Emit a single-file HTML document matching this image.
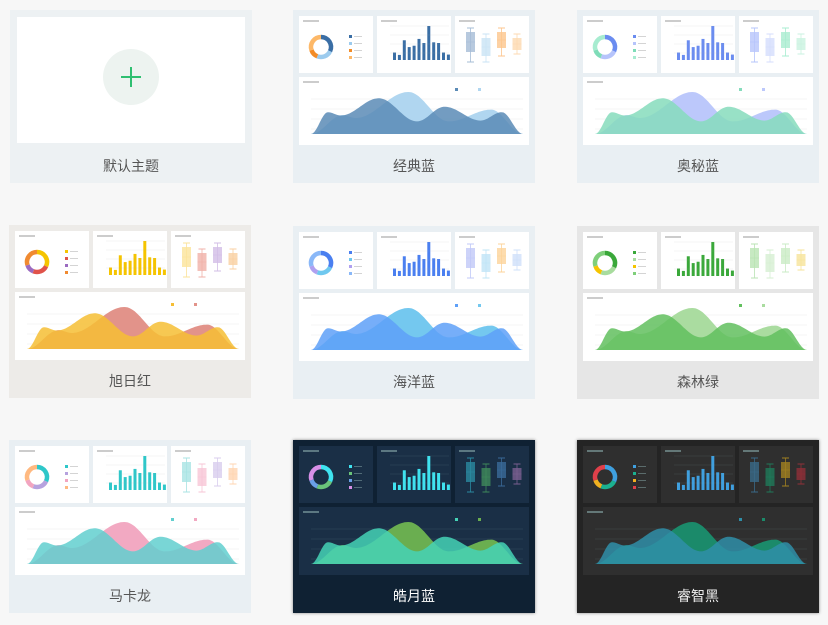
<!DOCTYPE html>
<html><head><meta charset="utf-8"><style>
body{margin:0;background:#f7f7f7;width:828px;height:625px;overflow:hidden;font-family:"Liberation Sans","Noto Sans CJK SC",sans-serif}
.card{position:absolute;width:242px;height:173px}
.lbl{position:absolute;left:0;right:0;top:146px;text-align:center;font-size:14px;color:#555}
</style></head><body>
<div class="card" style="left:10px;top:10px;background:#edf1f3">
 <div style="position:absolute;left:7px;top:7px;width:228px;height:126px;background:#fff"></div>
 <div style="position:absolute;left:93px;top:39px;width:56px;height:56px;border-radius:50%;background:#edf3f0"></div>
 <div style="position:absolute;left:111px;top:66px;width:20px;height:2px;background:#2fbf71"></div>
 <div style="position:absolute;left:120px;top:57px;width:2px;height:20px;background:#2fbf71"></div>
 <div class="lbl">默认主题</div>
</div>
<div id="root"></div>
<script>
const T=[
{x:293,y:10,n:"经典蓝",bg:"#e9eff3",p:"#fff",a:"#5b8bb6",b:"#b0d6f0",bar:"#3a6ea5",d:["#3a6ea5","#9ccbee","#f28c28","#fdb868"],bx:["#a5bcd6","#c9e3f5","#fdc58c","#fdd9b0"],t:"#555"},
{x:577,y:10,n:"奥秘蓝",bg:"#e9eff3",p:"#fff",a:"#86dcbc",b:"#bcc8fb",bar:"#6a8cf0",d:["#6a8cf0","#b6c4fb","#7fdcb8","#a7ecd0"],bx:["#b6c4fb","#d4ddfc","#a7ecd0","#c9f2e0"],t:"#555"},
{x:9,y:225,n:"旭日红",bg:"#edebe8",p:"#fff",a:"#f6be34",b:"#e2938a",bar:"#f5c400",d:["#f5c400","#e0534a","#9b6bc0","#f08a30"],bx:["#fbe39a","#f0b0a8","#d2bde6","#f9cfa0"],t:"#555"},
{x:293,y:226,n:"海洋蓝",bg:"#e9eff3",p:"#fff",a:"#5ea0f8",b:"#74c8ef",bar:"#4a7ff0",d:["#4a7ff0","#6fc8ef","#b0a0f0","#8ab8f8"],bx:["#c0c8f8","#bfe4f6","#fcd39a","#cfe0fa"],t:"#555"},
{x:577,y:226,n:"森林绿",bg:"#e6e6e6",p:"#fff",a:"#62c05e",b:"#aadca0",bar:"#3aa83a",d:["#3aa83a","#a8dc9e","#f5c400","#7fcf7a"],bx:["#b9e3b3","#d6efd2","#c9ebc4","#f6e39a"],t:"#555"},
{x:9,y:440,n:"马卡龙",bg:"#e9eff3",p:"#fff",a:"#62cfcf",b:"#f2a9c2",bar:"#2ec7c9",d:["#2ec7c9","#b6a2de","#f2a5c0","#ffb980"],bx:["#a8e3e3","#f7c5d6","#d8cdee","#ffd4b0"],t:"#555"},
{x:293,y:440,n:"皓月蓝",bg:"#0f2133",p:"#1a2f46",a:"#45d2b6",b:"#6aae50",bar:"#3fe3f0",d:["#3fe3f0","#6ac37a","#6aa0e8","#d890e8"],bx:["#2a8aa0","#3f8a5a","#3a6a98","#7a5f90"],t:"#fff",dark:1},
{x:577,y:440,n:"睿智黑",bg:"#242424",p:"#2f2f2f",a:"#2f8ea8",b:"#1b8a6a",bar:"#3fa0e0",d:["#3fa0e0","#1bb090","#f0b020","#e0404a"],bx:["#3a6a88","#1f7a5a","#a08020","#903038"],t:"#eee",dark:1}];
function interp(v,k){for(let i=0;i<k.length-1;i++){const [a,ha]=k[i],[b,hb]=k[i+1];if(v>=a&&v<=b){const t=(v-a)/(b-a);const s=(1-Math.cos(Math.PI*t))/2;return ha+(hb-ha)*s}}return 0}
function area(x0,y0,w,h,k,fill,op){let d=`M${x0},${y0}`;for(let i=0;i<=120;i++){let v=i/120;let y=y0-h*interp(v,k);d+=` L${(x0+w*v).toFixed(1)},${y.toFixed(1)}`}d+=` L${x0+w},${y0}Z`;return `<path d="${d}" fill="${fill}" opacity="${op}"/>`}
const A=[[0,0],[.08,.52],[.14,.44],[.32,.85],[.5,.3],[.63,.65],[.8,.32],[.9,.52],[1,0]];
const B=[[0,0],[.15,.45],[.21,.38],[.46,1],[.65,.3],[.85,.58],[1,0]];
let html="";
for(const t of T){
 let s=`<svg width="242" height="173" style="position:absolute;left:0;top:0">`;
 const P=[[6,6,74,57],[84,6,74,57],[162,6,74,57],[6,67,230,68]];
 for(const [x,y,w,h] of P)s+=`<rect x="${x}" y="${y}" width="${w}" height="${h}" fill="${t.p}"/>`;
 const tc=t.dark?"#8aa":"#aaa";
 for(const [x,y] of [[10,12],[88,12],[166,12],[10,73]])s+=`<rect x="${x}" y="${y-2}" width="16" height="2" fill="${tc}" opacity=".6"/>`;
 const cx=28,cy=37,r=10;let ang=-Math.PI/2;const fr=[.32,.24,.14,.30];
 fr.forEach((f,i)=>{let a2=ang+f*2*Math.PI;let x1=cx+r*Math.cos(ang),y1=cy+r*Math.sin(ang),x2=cx+r*Math.cos(a2),y2=cy+r*Math.sin(a2);s+=`<path d="M${x1},${y1} A${r},${r} 0 ${f>.5?1:0} 1 ${x2},${y2}" stroke="${t.d[i]}" stroke-width="4.5" fill="none"/>`;ang=a2;
  s+=`<rect x="56" y="${25+i*7}" width="3" height="3" fill="${t.d[i]}"/><rect x="61" y="${26+i*7}" width="8" height="1" fill="${tc}" opacity=".5"/>`});
 const bh=[.22,.15,.58,.38,.42,.62,.5,1,.52,.5,.22,.16];
 bh.forEach((h,i)=>{s+=`<rect x="${100+i*4.9}" y="${50-h*34}" width="3" height="${h*34}" fill="${t.bar}"/>`});
 for(let i=0;i<4;i++)s+=`<line x1="97" x2="156" y1="${16+i*9}" y2="${16+i*9}" stroke="${tc}" stroke-width=".3" opacity=".4"/>`;
 const bxs=[[18,52,22,42],[24,52,28,46],[18,46,22,38],[24,44,28,40]];
 bxs.forEach(([t1,b1,q1,q2],i)=>{let x=173+i*15.5;let c=t.bx[i];s+=`<line x1="${x+4.5}" x2="${x+4.5}" y1="${t1}" y2="${b1}" stroke="${c}" stroke-width=".8"/><rect x="${x}" y="${q1}" width="9" height="${q2-q1}" fill="${c}" opacity=".8"/><line x1="${x}" x2="${x+9}" y1="${(q1+q2)/2}" y2="${(q1+q2)/2}" stroke="${c}" stroke-width=".6"/><line x1="${x+1}" x2="${x+8}" y1="${t1}" y2="${t1}" stroke="${c}"/><line x1="${x+1}" x2="${x+8}" y1="${b1}" y2="${b1}" stroke="${c}"/>`});
 for(let i=0;i<4;i++)s+=`<line x1="18" x2="230" y1="${89+i*10}" y2="${89+i*10}" stroke="${tc}" stroke-width=".3" opacity=".4"/>`;
 s+=`<rect x="162" y="78" width="3" height="3" fill="${t.a}"/><rect x="185" y="78" width="3" height="3" fill="${t.b}"/>`;
 s+=area(18,124,212,42,B,t.b,1);
 s+=area(18,124,212,42,A,t.a,.85);
 s+=`</svg>`;
 html+=`<div class="card" style="left:${t.x}px;top:${t.y}px;background:${t.bg};${t.dark?'box-shadow:0 0 3px #888;':''}">${s}<div class="lbl" style="color:${t.t}">${t.n}</div></div>`;
}
document.getElementById("root").innerHTML=html;
</script>
</body></html>
